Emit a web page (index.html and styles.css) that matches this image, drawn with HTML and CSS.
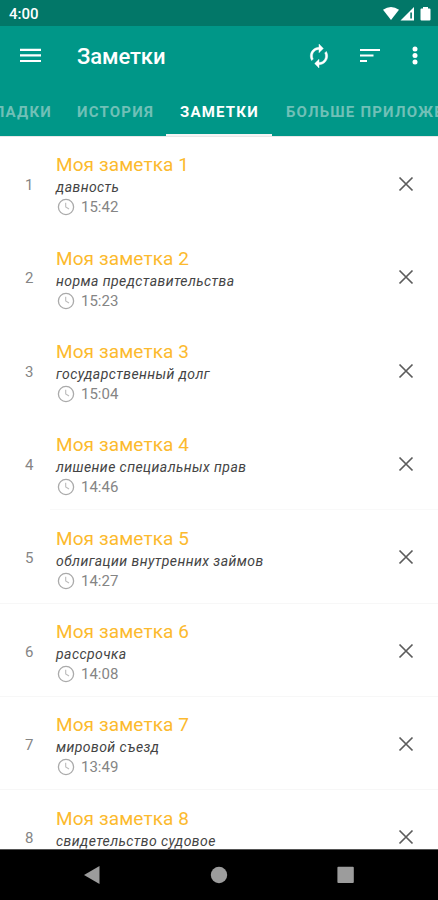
FILE: index.html
```
<!DOCTYPE html>
<html lang="ru">

<head>
    <meta charset="utf-8">
    <title>Заметки</title>
    <link rel="stylesheet" href="styles.css">
</head>

<body>
    <svg class="sprite">
        <symbol id="close" viewBox="0 0 16 16">
            <path d="M1.5 1.5l13 13M14.5 1.5l-13 13" fill="none" stroke="#5c5c5c" stroke-width="1.7" />
        </symbol>
        <symbol id="clock" viewBox="0 0 18 18">
            <circle cx="9" cy="9" r="7.6" fill="none" stroke="#aaa" stroke-width="1.3" />
            <path d="M8.7 4.8V9l3.3 2" fill="none" stroke="#bbb" stroke-width="1.1" />
        </symbol>
    </svg>

    <div class="status">
        <span class="status-time">4:00</span>
        <svg width="50" height="16" viewBox="0 0 50 16" fill="#fff">
            <path d="M1 3.8Q9 -1.8 17 3.8L9 14z" />
            <path d="M18.5 14.5L32 1v13.5z" />
            <path d="M28.3 6.5h1.6v6h-1.6z" fill="#027768" />
            <path d="M41 1h5v1.6h1.5q1 0 1 1V13.5q0 1-1 1h-8q-1 0-1-1V3.6q0-1 1-1H41z" />
        </svg>
    </div>

    <header>
        <div class="toolbar">
            <svg class="menu" width="22" height="16" viewBox="0 0 22 16" fill="#fff">
                <path d="M0 0.7h21v2.2H0zM0 6.2h21v2.2H0zM0 11.9h21v2.2H0z" />
            </svg>
            <h1>Заметки</h1>
            <svg class="sync" width="26" height="26" viewBox="0 0 24 24" fill="#fff" stroke="#fff" stroke-width="0.4">
                <path d="M12 6v3l4-4-4-4v3c-4.42 0-8 3.58-8 8 0 1.57.46 3.03 1.24 4.26L6.7 14.8c-.45-.83-.7-1.79-.7-2.8 0-3.31 2.69-6 6-6zm6.76 1.74L17.3 9.2c.44.84.7 1.79.7 2.8 0 3.31-2.69 6-6 6v-3l-4 4 4 4v-3c4.42 0 8-3.58 8-8 0-1.57-.46-3.03-1.24-4.26z" />
            </svg>
            <svg class="sort" width="20" height="16" viewBox="0 0 20 16" fill="#fff">
                <path d="M0 0.9h20v2.2H0zM0 6.4h13.5v2.2H0zM0 11.9h7v2.2H0z" />
            </svg>
            <svg class="more" width="6" height="20" viewBox="0 0 6 20" fill="#fff">
                <circle cx="3" cy="3" r="2.5" />
                <circle cx="3" cy="9.5" r="2.5" />
                <circle cx="3" cy="16" r="2.5" />
            </svg>
        </div>
        <nav class="tabs">
            <div class="tab tab-first">ЗАКЛАДКИ</div>
            <div class="tab tab-history">ИСТОРИЯ</div>
            <div class="tab tab-notes active">ЗАМЕТКИ</div>
            <div class="tab">БОЛЬШЕ ПРИЛОЖЕНИЙ</div>
        </nav>
    </header>

    <main>
        <div class="note">
            <div class="number">1</div>
            <div class="content">
                <h2>Моя заметка 1</h2>
                <p>давность</p>
                <div class="time"><svg><use href="#clock" /></svg>15:42</div>
            </div>
            <svg class="close"><use href="#close" /></svg>
        </div>
        <div class="note">
            <div class="number">2</div>
            <div class="content">
                <h2>Моя заметка 2</h2>
                <p>норма представительства</p>
                <div class="time"><svg><use href="#clock" /></svg>15:23</div>
            </div>
            <svg class="close"><use href="#close" /></svg>
        </div>
        <div class="note">
            <div class="number">3</div>
            <div class="content">
                <h2>Моя заметка 3</h2>
                <p>государственный долг</p>
                <div class="time"><svg><use href="#clock" /></svg>15:04</div>
            </div>
            <svg class="close"><use href="#close" /></svg>
        </div>
        <div class="note line-inset">
            <div class="number">4</div>
            <div class="content">
                <h2>Моя заметка 4</h2>
                <p>лишение специальных прав</p>
                <div class="time"><svg><use href="#clock" /></svg>14:46</div>
            </div>
            <svg class="close"><use href="#close" /></svg>
        </div>
        <div class="note line">
            <div class="number">5</div>
            <div class="content">
                <h2>Моя заметка 5</h2>
                <p>облигации внутренних займов</p>
                <div class="time"><svg><use href="#clock" /></svg>14:27</div>
            </div>
            <svg class="close"><use href="#close" /></svg>
        </div>
        <div class="note line">
            <div class="number">6</div>
            <div class="content">
                <h2>Моя заметка 6</h2>
                <p>рассрочка</p>
                <div class="time"><svg><use href="#clock" /></svg>14:08</div>
            </div>
            <svg class="close"><use href="#close" /></svg>
        </div>
        <div class="note line">
            <div class="number">7</div>
            <div class="content">
                <h2>Моя заметка 7</h2>
                <p>мировой съезд</p>
                <div class="time"><svg><use href="#clock" /></svg>13:49</div>
            </div>
            <svg class="close"><use href="#close" /></svg>
        </div>
        <div class="note">
            <div class="number">8</div>
            <div class="content">
                <h2>Моя заметка 8</h2>
                <p>свидетельство судовое</p>
            </div>
            <svg class="close"><use href="#close" /></svg>
        </div>
    </main>

    <footer>
        <svg width="18" height="20" viewBox="0 0 18 20"><path d="M1 10L16.5 1v18z" /></svg>
        <svg width="18" height="20" viewBox="0 0 18 20"><circle cx="9" cy="10" r="8.2" /></svg>
        <svg width="18" height="20" viewBox="0 0 18 20"><rect x="0.4" y="1.7" width="16.4" height="16.4" rx="1" /></svg>
    </footer>
</body>

</html>
```
FILE: styles.css
```
* {
    box-sizing: border-box;
}

body {
    margin: 0;
    height: 900px;
    display: flex;
    flex-direction: column;
    overflow: hidden;
    background-color: #fff;
    font-family: Roboto, "Noto Sans", sans-serif;
}

svg {
    display: block;
    flex-shrink: 0;
}

.sprite {
    width: 0;
    height: 0;
}

.status {
    height: 26px;
    flex-shrink: 0;
    display: flex;
    align-items: center;
    justify-content: space-between;
    padding: 1px 6px 0 9px;
    overflow: hidden;
    background-color: #027768;
    color: #fff;
}

.status-time {
    font-size: 15px;
    font-weight: 500;
}

header {
    height: 110px;
    flex-shrink: 0;
    overflow: hidden;
    background-color: #009788;
    color: #fff;
}

.toolbar {
    height: 60px;
    display: flex;
    align-items: center;
    padding: 0 20px;
}

h1 {
    flex: 1;
    margin: 0 0 0 35px;
    font-size: 22px;
    font-weight: 500;
    letter-spacing: -0.1px;
}

.sync {
    margin-right: 28px;
}

.sort {
    margin-right: 32px;
}

.tabs {
    height: 50px;
    display: flex;
}

.tab {
    flex-shrink: 0;
    padding: 17px 12px 0 14px;
    font-size: 15px;
    line-height: 18px;
    font-weight: 700;
    letter-spacing: 1.2px;
    white-space: nowrap;
    color: #70c0b7;
}

.tab-first {
    width: 64px;
    display: flex;
    justify-content: flex-end;
}

.tab-history {
    width: 102px;
    padding-left: 13px;
}

.tab-notes {
    width: 106px;
}

.active {
    border-bottom: 2px solid #f4f4f4;
    color: #fff;
}

main {
    flex: 1;
    min-height: 0;
    overflow: hidden;
    border-top: 1px solid #e8e8e8;
}

.note {
    height: 93.35px;
    display: flex;
    padding-right: 24px;
}

.line {
    background: linear-gradient(#f7f7f7, #f7f7f7) 0 100% / 100% 1px no-repeat;
}

.line-inset {
    background: linear-gradient(#f9f9f9, #f9f9f9) 50px 100% / 100% 1px no-repeat;
}

.number {
    width: 56px;
    padding: 38px 0 0 25px;
    font-size: 15px;
    line-height: 20px;
    color: #858585;
}

.content {
    flex: 1;
    padding-top: 16.4px;
}

h2 {
    margin: 0;
    font-size: 19px;
    line-height: 24px;
    font-weight: 400;
    letter-spacing: 0.1px;
    color: #fcba2e;
}

p {
    margin: 0;
    font-size: 14px;
    line-height: 20px;
    font-style: italic;
    letter-spacing: 0.43px;
    color: #444;
}

.time {
    display: flex;
    align-items: center;
    gap: 6px;
    height: 20px;
    font-size: 15px;
    color: #858585;
}

.time svg {
    width: 18px;
    height: 18px;
    margin-left: 1px;
}

.close {
    width: 16px;
    height: 16px;
    margin-top: 39px;
}

footer {
    height: 51px;
    flex-shrink: 0;
    display: flex;
    align-items: center;
    justify-content: center;
    gap: 109px;
    border-top: 1px solid #555;
    background-color: #000;
}

footer svg {
    fill: #9c9c9c;
}
```
